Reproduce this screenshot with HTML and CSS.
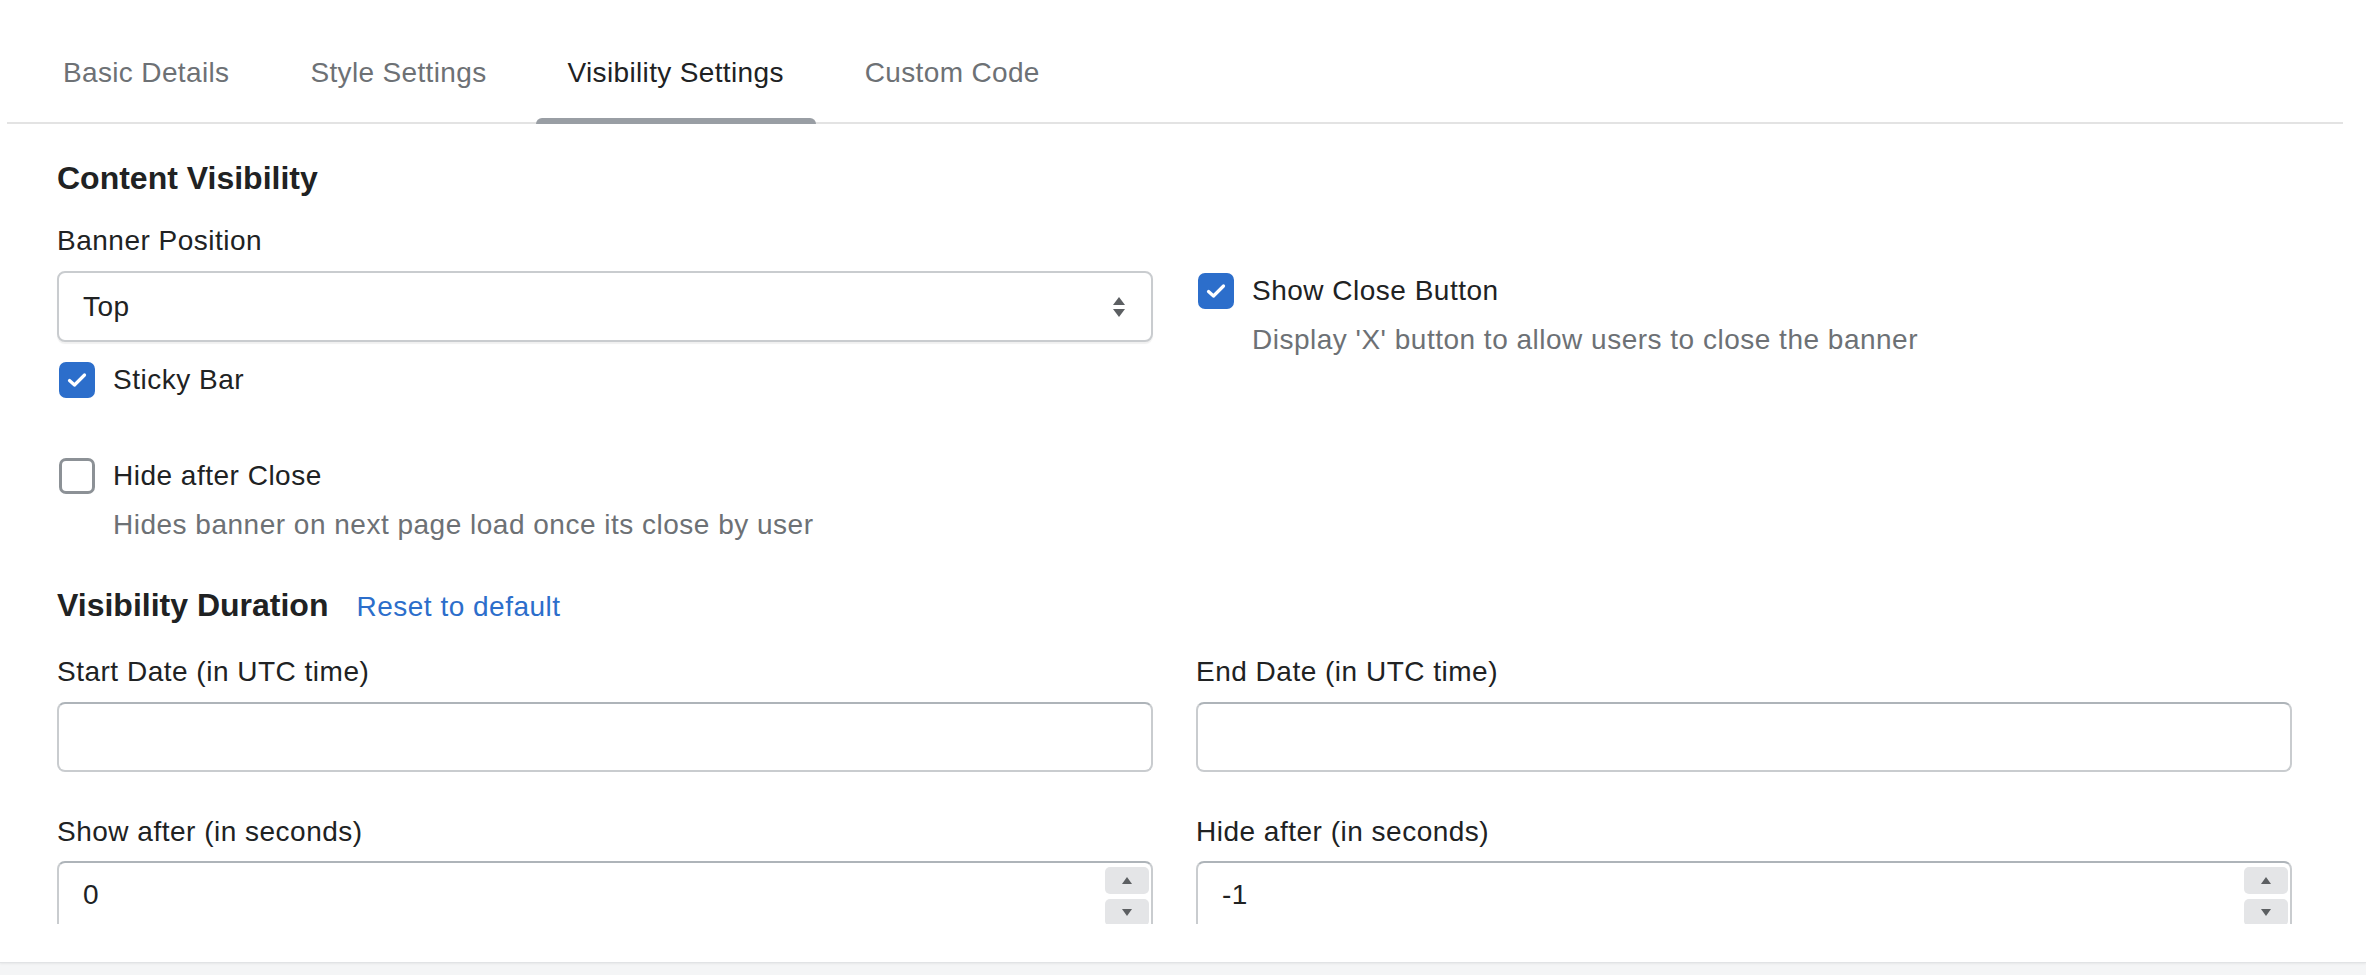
FILE: index.html
```html
<!DOCTYPE html>
<html lang="en">
<head>
<meta charset="utf-8">
<title>Visibility Settings</title>
<link rel="stylesheet" href="styles.css">
</head>
<body>
<div class="panel">
  <nav class="tabs">
    <div class="tab">Basic Details</div>
    <div class="tab">Style Settings</div>
    <div class="tab tab-active">Visibility Settings</div>
    <div class="tab">Custom Code</div>
  </nav>
  <div class="body">
    <div class="content">
      <h2 class="heading first">Content Visibility</h2>
      <div class="grid">
        <div class="col">
          <div class="label">Banner Position</div>
          <div class="field select">
            <span class="value">Top</span>
            <svg class="select-arrows" width="12" height="20" viewBox="0 0 12 20"><path d="M6 0 L12 8 L0 8 Z M0 12 L12 12 L6 20 Z" fill="#5c5f62"/></svg>
          </div>
          <div class="check-row sticky">
            <span class="box checked"><svg width="20" height="16" viewBox="0 0 20 16"><path d="M2.5 8.5 L7.5 13 L17.5 3" fill="none" stroke="#fff" stroke-width="3.2" stroke-linecap="round" stroke-linejoin="round"/></svg></span>
            <span class="check-label">Sticky Bar</span>
          </div>
          <div class="check-row hide-close">
            <span class="box"></span>
            <span class="check-label">Hide after Close</span>
          </div>
          <div class="desc">Hides banner on next page load once its close by user</div>
        </div>
        <div class="col">
          <div class="check-row show-close">
            <span class="box checked"><svg width="20" height="16" viewBox="0 0 20 16"><path d="M2.5 8.5 L7.5 13 L17.5 3" fill="none" stroke="#fff" stroke-width="3.2" stroke-linecap="round" stroke-linejoin="round"/></svg></span>
            <span class="check-label">Show Close Button</span>
          </div>
          <div class="desc">Display 'X' button to allow users to close the banner</div>
        </div>
      </div>

      <div class="heading-row">
        <h2 class="heading">Visibility Duration</h2>
        <a class="link">Reset to default</a>
      </div>

      <div class="grid">
        <div class="col">
          <div class="label label-sm">Start Date (in UTC time)</div>
          <div class="field text"></div>
        </div>
        <div class="col">
          <div class="label label-sm">End Date (in UTC time)</div>
          <div class="field text"></div>
        </div>
      </div>

      <div class="grid">
        <div class="col">
          <div class="label label-num">Show after (in seconds)</div>
          <div class="field number">
            <span class="value">0</span>
            <div class="spinner">
              <span class="spin"><svg width="10" height="7" viewBox="0 0 10 7"><path d="M5 0 L10 7 L0 7 Z" fill="#5c5f62"/></svg></span>
              <span class="spin"><svg width="10" height="7" viewBox="0 0 10 7"><path d="M0 0 L10 0 L5 7 Z" fill="#5c5f62"/></svg></span>
            </div>
          </div>
        </div>
        <div class="col">
          <div class="label label-num">Hide after (in seconds)</div>
          <div class="field number">
            <span class="value">-1</span>
            <div class="spinner">
              <span class="spin"><svg width="10" height="7" viewBox="0 0 10 7"><path d="M5 0 L10 7 L0 7 Z" fill="#5c5f62"/></svg></span>
              <span class="spin"><svg width="10" height="7" viewBox="0 0 10 7"><path d="M0 0 L10 0 L5 7 Z" fill="#5c5f62"/></svg></span>
            </div>
          </div>
        </div>
      </div>
    </div>
  </div>
</div>
</body>
</html>
```

FILE: styles.css
```css
* { box-sizing: border-box; }

html, body {
  margin: 0;
  padding: 0;
}

body {
  background: #f4f5f6;
  font-family: "Liberation Sans", Arial, sans-serif;
  color: #202223;
  font-size: 28px;
  line-height: 40px;
  letter-spacing: 0.5px;
  height: 975px;
  overflow: hidden;
}

.panel {
  background: #ffffff;
  height: 963px;
  padding: 0 23px 39px 7px;
  border-bottom: 1px solid #e1e3e5;
  box-shadow: 0 1px 2px rgba(0, 0, 0, 0.06);
}

.tabs {
  display: flex;
  gap: 17px;
  padding-left: 24px;
  border-bottom: 2px solid #e3e3e3;
  height: 124px;
}

.tab {
  position: relative;
  padding: 56px 32px 0;
  line-height: 34px;
  height: 122px;
  color: #6d7175;
  font-size: 28px;
  letter-spacing: 0.35px;
}

.tab-active {
  color: #202223;
}

.tab-active::after {
  content: "";
  position: absolute;
  left: 0;
  right: 0;
  bottom: -2px;
  height: 6px;
  background: #999ea4;
  border-radius: 6px 6px 0 0;
}

.body {
  height: 800px;
  overflow: hidden;
}

.content {
  padding: 0 51px 0 50px;
}

.heading {
  margin: 0;
  font-size: 32px;
  font-weight: 700;
  line-height: 40px;
  letter-spacing: 0;
  color: #202223;
}

.heading.first {
  margin-top: 34px;
}

.grid {
  display: grid;
  grid-template-columns: 1fr 1fr;
  column-gap: 43px;
}

.col {
  display: flex;
  flex-direction: column;
  align-items: flex-start;
}

.label {
  margin-top: 23px;
  margin-bottom: 10px;
}

.label-sm {
  margin-top: 25px;
  margin-bottom: 10px;
}

.label-num {
  margin-top: 40px;
  margin-bottom: 9px;
}

.field {
  width: 100%;
  background: #fff;
  border: 2px solid #c9cccf;
  border-top-color: #aeb4b9;
  border-radius: 8px;
}

.select {
  height: 71px;
  display: flex;
  align-items: center;
  justify-content: space-between;
  padding: 0 26px 0 24px;
  border-color: #c9cccf;
  box-shadow: 0 2px 1px rgba(0, 0, 0, 0.06);
}

.select .value {
  line-height: 40px;
}

.select-arrows {
  display: block;
}

.text {
  height: 70px;
}

.number {
  height: 70px;
  display: flex;
  align-items: flex-start;
  justify-content: space-between;
  padding: 0 2px 0 24px;
}

.number .value {
  margin-top: 12px;
  line-height: 40px;
}

.spinner {
  display: flex;
  flex-direction: column;
  gap: 5px;
  margin-top: 4px;
}

.spin {
  width: 44px;
  height: 27px;
  background: #e4e5e7;
  border-radius: 5px;
  display: flex;
  align-items: center;
  justify-content: center;
}

.check-row {
  display: flex;
  align-items: center;
  height: 40px;
  gap: 18px;
}

.sticky {
  margin-top: 18px;
  padding-left: 2px;
}

.hide-close {
  margin-top: 56px;
  padding-left: 2px;
}

.show-close {
  margin-top: 73px;
  padding-left: 2px;
}

.box {
  width: 36px;
  height: 36px;
  border-radius: 7px;
  border: 3px solid #8c9196;
  background: #fff;
  display: flex;
  align-items: center;
  justify-content: center;
  flex: none;
}

.box.checked {
  background: #2c6ecb;
  border-color: #2c6ecb;
}

.box svg {
  display: block;
}

.check-label {
  color: #202223;
}

.desc {
  margin-top: 9px;
  padding-left: 56px;
  color: #6d7175;
}

.heading-row {
  display: flex;
  align-items: baseline;
  gap: 28px;
  margin-top: 40px;
}

.link {
  color: #2c6ecb;
  font-size: 28px;
  text-decoration: none;
}
```
